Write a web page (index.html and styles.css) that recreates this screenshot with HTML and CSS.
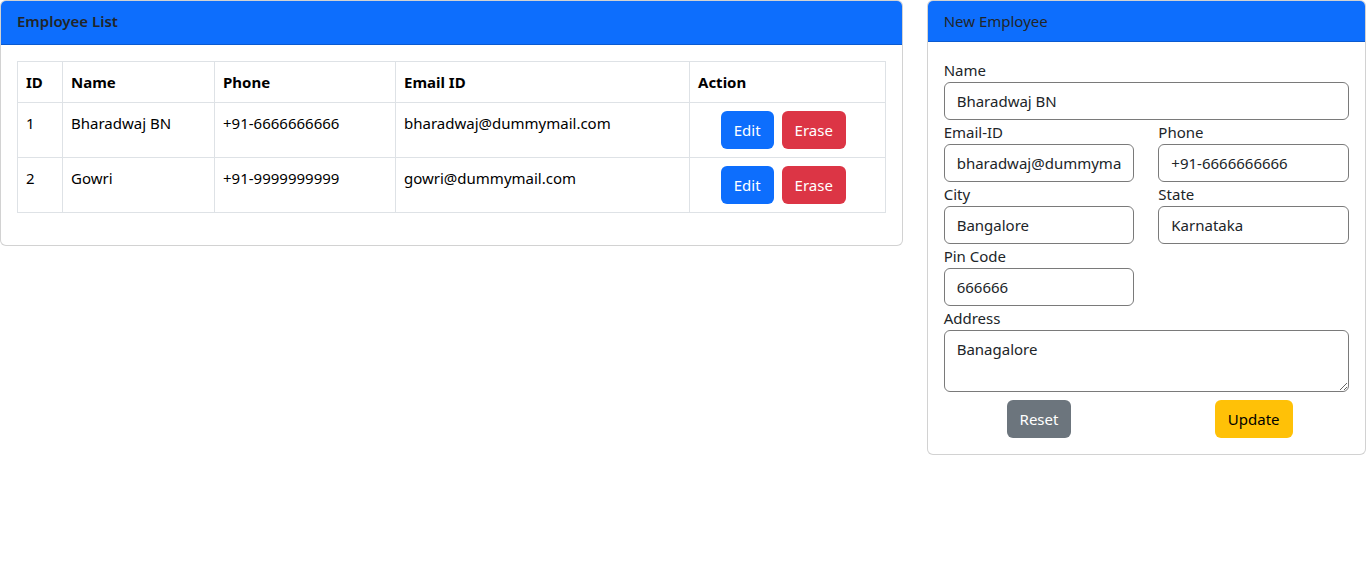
FILE: index.html
```html
<!DOCTYPE html>
<html lang="en">
<head>
<meta charset="utf-8">
<title>Employees</title>
<link rel="stylesheet" href="styles.css">
</head>
<body>
<div class="layout">
  <div class="col-main">
    <div class="card">
      <div class="card-header"><h6 class="card-title">Employee List</h6></div>
      <div class="card-body">
        <table class="table">
          <colgroup>
            <col class="w-id"><col class="w-name"><col class="w-phone"><col class="w-email"><col class="w-action">
          </colgroup>
          <thead>
            <tr><th>ID</th><th>Name</th><th>Phone</th><th>Email ID</th><th>Action</th></tr>
          </thead>
          <tbody>
            <tr>
              <td>1</td><td>Bharadwaj BN</td><td>+91-6666666666</td><td>bharadwaj@dummymail.com</td>
              <td><div class="actions"><button class="btn btn-primary">Edit</button><button class="btn btn-danger">Erase</button></div></td>
            </tr>
            <tr>
              <td>2</td><td>Gowri</td><td>+91-9999999999</td><td>gowri@dummymail.com</td>
              <td><div class="actions"><button class="btn btn-primary">Edit</button><button class="btn btn-danger">Erase</button></div></td>
            </tr>
          </tbody>
        </table>
      </div>
    </div>
  </div>
  <div class="col-side">
    <div class="card">
      <div class="card-header">New Employee</div>
      <div class="card-body">
        <form class="form">
          <div class="field full">
            <label>Name</label>
            <input class="control" type="text" value="Bharadwaj BN">
          </div>
          <div class="field">
            <label>Email-ID</label>
            <input class="control" type="text" value="bharadwaj@dummymail.com">
          </div>
          <div class="field">
            <label>Phone</label>
            <input class="control" type="text" value="+91-6666666666">
          </div>
          <div class="field">
            <label>City</label>
            <input class="control" type="text" value="Bangalore">
          </div>
          <div class="field">
            <label>State</label>
            <input class="control" type="text" value="Karnataka">
          </div>
          <div class="field">
            <label>Pin Code</label>
            <input class="control" type="text" value="666666">
          </div>
          <div class="field full">
            <label>Address</label>
            <textarea class="control area" rows="2">Banagalore</textarea>
          </div>
          <div class="form-actions">
            <div class="cell"><button type="button" class="btn btn-secondary">Reset</button></div>
            <div class="cell"><button type="button" class="btn btn-warning">Update</button></div>
          </div>
        </form>
      </div>
    </div>
  </div>
</div>
</body>
</html>
```
FILE: styles.css
```css
* { box-sizing: border-box; }
body {
  margin: 0;
  font-family: "Noto Sans", "Open Sans", sans-serif;
  font-size: 15px;
  line-height: 24px;
  color: #212529;
  background: #fff;
}
.layout {
  display: flex;
  align-items: flex-start;
  gap: 24px;
}
.col-main { flex: 0 0 calc((100% + 24px) * 2 / 3 - 24px); }
.col-side { flex: 1 1 0; min-width: 0; }

.card {
  border: 1px solid rgba(0,0,0,.175);
  border-radius: 6px;
  overflow: hidden;
  background: #fff;
}
.card-header {
  background: #0d6efd;
  border-bottom: 1px solid rgba(0,0,0,.175);
  padding: 8px 16px;
  color: #212529;
}
.card-title {
  margin: 0 0 3px;
  font-size: 15px;
  line-height: 24px;
  font-weight: 600;
}
.card-body { padding: 16px; }

.table {
  width: 100%;
  margin-bottom: 16px;
  border-collapse: collapse;
  table-layout: fixed;
  color: #000;
}
.w-id { width: 45px; }
.w-name { width: 152px; }
.w-phone { width: 181px; }
.w-email { width: 294px; }
.table th, .table td {
  border: 1px solid #dee2e6;
  padding: 8px;
  vertical-align: top;
  text-align: left;
}
.table th { font-weight: 700; }
.actions {
  display: flex;
  justify-content: center;
  gap: 8px;
  padding-right: 8px;
}

.btn {
  display: inline-block;
  font-family: inherit;
  font-size: 15px;
  line-height: 24px;
  padding: 6px 12px;
  border: 1px solid transparent;
  border-radius: 6px;
  cursor: pointer;
}
.btn-primary { background: #0d6efd; color: #fff; }
.btn-danger { background: #dc3545; color: #fff; }
.btn-secondary { background: #6c757d; color: #fff; }
.btn-warning { background: #ffc107; color: #000; }

.form {
  display: grid;
  grid-template-columns: 1fr 1fr;
  column-gap: 24px;
}
.field { display: flex; flex-direction: column; }
.field.full { grid-column: 1 / -1; }
.field label { line-height: 24px; }
.control {
  display: block;
  width: 100%;
  height: 38px;
  padding: 6px 12px;
  font-family: inherit;
  font-size: 15px;
  line-height: 24px;
  color: #212529;
  background: #fff;
  border: 1px solid #7a7a7a;
  border-radius: 6px;
  outline: none;
}
.area { height: 62px; resize: both; }
.form-actions {
  grid-column: 1 / -1;
  display: grid;
  grid-template-columns: 1fr 1fr;
  column-gap: 24px;
  margin-top: 8px;
}
.form-actions .cell { text-align: center; }
```
